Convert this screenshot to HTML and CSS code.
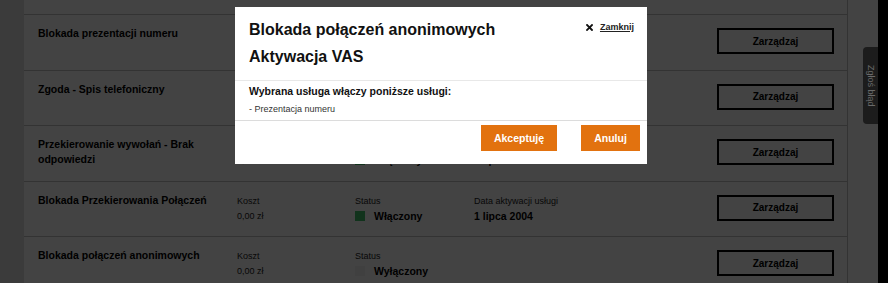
FILE: index.html
```html
<!DOCTYPE HTML>
<html>
    <head>
        <meta charset="utf-8">
        <title>Usługi dodatkowe</title>
        <link rel="stylesheet" href="styles.css">
    </head>
    <body>
        <div class="page">
            <div class="gutter"></div>
            <div class="content">
                <div class="services">
                    <div class="row row-cut"></div>

                    <div class="row">
                        <div class="name">Blokada prezentacji numeru</div>
                        <div class="cell"></div>
                        <div class="cell"></div>
                        <div class="cell"></div>
                        <button type="button" class="manage">Zarządzaj</button>
                    </div>

                    <div class="row">
                        <div class="name">Zgoda - Spis telefoniczny</div>
                        <div class="cell"></div>
                        <div class="cell"></div>
                        <div class="cell"></div>
                        <button type="button" class="manage">Zarządzaj</button>
                    </div>

                    <div class="row">
                        <div class="name">Przekierowanie wywołań - Brak odpowiedzi</div>
                        <div class="cell"><span class="label">Koszt</span><span class="value">0,00 zł</span></div>
                        <div class="cell"><span class="label">Status</span><span class="state"><i class="dot on"></i>Włączony</span></div>
                        <div class="cell"><span class="label">Data aktywacji usługi</span><span class="state">1 lipca 2004</span></div>
                        <button type="button" class="manage">Zarządzaj</button>
                    </div>

                    <div class="row">
                        <div class="name">Blokada Przekierowania Połączeń</div>
                        <div class="cell"><span class="label">Koszt</span><span class="value">0,00 zł</span></div>
                        <div class="cell"><span class="label">Status</span><span class="state"><i class="dot on"></i>Włączony</span></div>
                        <div class="cell"><span class="label">Data aktywacji usługi</span><span class="state">1 lipca 2004</span></div>
                        <button type="button" class="manage">Zarządzaj</button>
                    </div>

                    <div class="row">
                        <div class="name">Blokada połączeń anonimowych</div>
                        <div class="cell"><span class="label">Koszt</span><span class="value">0,00 zł</span></div>
                        <div class="cell"><span class="label">Status</span><span class="state"><i class="dot off"></i>Wyłączony</span></div>
                        <div class="cell"></div>
                        <button type="button" class="manage">Zarządzaj</button>
                    </div>
                </div>
            </div>
            <div class="edge"></div>
        </div>

        <!-- przyciemnienie + okno dialogowe -->
        <div class="overlay"></div>
        <a class="report" href="#">Zgłoś błąd</a>

        <div class="modal">
            <div class="modal-head">
                <h2>Blokada połączeń anonimowych<br>Aktywacja VAS</h2>
                <a class="close" href="#">
                    <svg width="7" height="7" viewBox="0 0 7 7"><path d="M1 1 L6 6 M6 1 L1 6" stroke="#111" stroke-width="1.8" stroke-linecap="square"/></svg>
                    <span>Zamknij</span>
                </a>
            </div>
            <div class="modal-body">
                <p class="lead">Wybrana usługa włączy poniższe usługi:</p>
                <p class="item">- Prezentacja numeru</p>
            </div>
            <div class="modal-foot">
                <button type="button" class="btn accept">Akceptuję</button>
                <button type="button" class="btn cancel">Anuluj</button>
            </div>
        </div>
    </body>
</html>
```

FILE: styles.css
```css
html, body {
    margin: 0;
    height: 100%;
    overflow: hidden;
    font-family: "Liberation Sans", Arial, sans-serif;
}
.page {
    display: flex;
    height: 100%;
    background-color: #d2d2d2;
}
.gutter {
    width: 24px;
    flex: none;
}
.content {
    width: 854px;
    flex: none;
    background-color: #f0f0f0;
}
.edge {
    flex: 1;
    background-color: #000;
}
.services {
    width: 823px;
    border-right: 1px solid #b8b8b8;
    height: 100%;
}
.row {
    box-sizing: border-box;
    height: 55.5px;
    border-bottom: 1px solid #b6b6b6;
    padding: 11px 13px 0 14px;
    display: grid;
    grid-template-columns: 199px 118px 119px 1fr 117px;
    align-items: start;
}
.row-cut {
    height: 15px;
    padding: 0;
}
.name {
    font-size: 10.5px;
    font-weight: bold;
    line-height: 15px;
    color: #000;
    padding-right: 14px;
}
.cell {
    margin-top: 1px;
    display: flex;
    flex-direction: column;
}
.label, .value {
    font-size: 9px;
    line-height: 15px;
    color: #222;
}
.state {
    display: flex;
    align-items: center;
    gap: 9px;
    font-size: 10.5px;
    font-weight: bold;
    line-height: 15px;
    color: #000;
}
.dot {
    width: 10px;
    height: 10px;
    margin-top: -1px;
}
.dot.on {
    background-color: #3fb764;
}
.dot.off {
    background-color: #e4e4e4;
}
button.manage {
    margin-top: 2px;
    height: 26px;
    border: 2px solid #000;
    background: transparent;
    font-family: inherit;
    font-size: 10px;
    font-weight: bold;
    color: #000;
}

/* warstwa nad stroną */
.overlay {
    position: fixed;
    top: 0; right: 0; bottom: 0; left: 0;
    background-color: rgba(0, 0, 0, 0.72);
}
.report {
    position: fixed;
    right: 10px;
    top: 47px;
    width: 15px;
    height: 77px;
    border-radius: 4px 0 0 4px;
    background-color: #1c1c1c;
    color: #6a6a6a;
    font-size: 9px;
    text-decoration: none;
    writing-mode: vertical-rl;
    display: flex;
    align-items: center;
    justify-content: center;
}
.modal {
    position: fixed;
    left: 235px;
    top: 7px;
    width: 412px;
    background-color: #fff;
}
.modal-head {
    display: flex;
    justify-content: space-between;
    align-items: flex-start;
    padding: 9px 13px 10px 14px;
    border-bottom: 1px solid #e8e8e8;
}
.modal-head h2 {
    margin: 0;
    font-size: 16px;
    line-height: 27px;
    color: #111;
}
.close {
    display: flex;
    align-items: center;
    gap: 7px;
    margin-top: 4px;
    font-size: 9px;
    font-weight: bold;
    line-height: 14px;
    color: #222;
}
.close span {
    text-decoration: underline;
}
.modal-body {
    padding: 3px 14px 4px;
    border-bottom: 1px solid #dcdcdc;
}
.modal-body p {
    margin: 0;
    line-height: 14px;
    color: #111;
}
.lead {
    font-size: 10.5px;
    font-weight: bold;
}
.modal-body .item {
    margin-top: 4px;
    font-size: 9px;
    color: #333;
}
.modal-foot {
    display: flex;
    justify-content: flex-end;
    gap: 24px;
    padding: 4px 7px 13px;
}
.btn {
    height: 26px;
    border: 0;
    background-color: #e2720f;
    color: #fff;
    font-family: inherit;
    font-size: 10.5px;
    font-weight: bold;
}
.btn.accept {
    width: 76px;
}
.btn.cancel {
    width: 59px;
}
```
